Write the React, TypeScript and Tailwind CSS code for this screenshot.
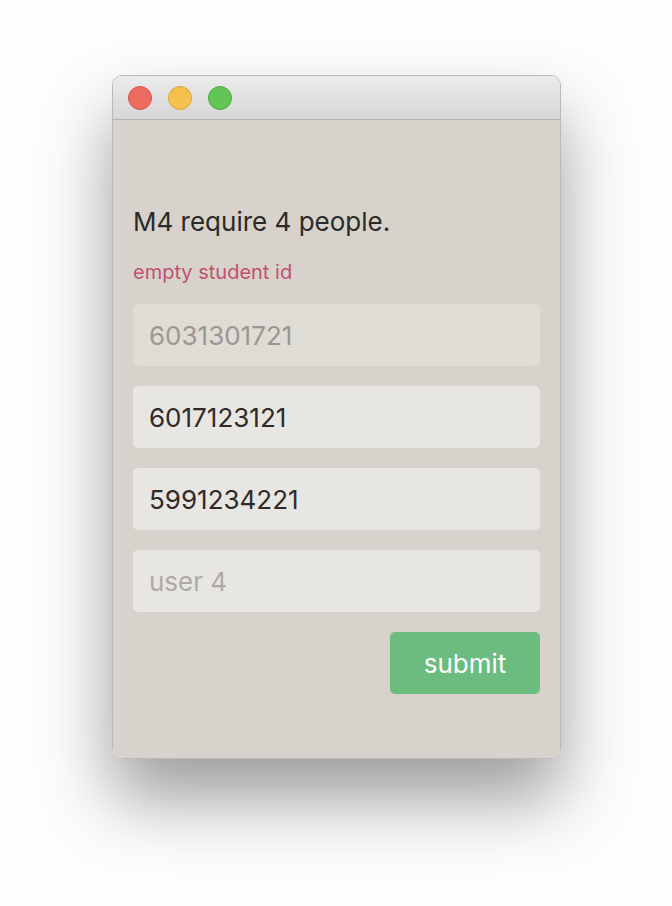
export default function App() {
  const font = { fontFamily: "Inter, 'Noto Sans', sans-serif" };
  return (
    <div className="w-[672px] h-[906px] bg-[#fdfdfd] flex justify-center pt-[75px] pl-[1px]" style={font}>
      <div className="w-[449px] h-[684px] flex flex-col rounded-[10px] border border-[#b9b9b9] overflow-hidden shadow-[0_40px_70px_rgba(0,0,0,0.38)]">
        {/* title bar */}
        <div className="h-[44px] shrink-0 flex items-center gap-[16px] pl-[15px] bg-gradient-to-b from-[#ececec] to-[#d6d6d6] border-b border-[#b3b3b3]">
          <span className="w-[24px] h-[24px] rounded-full bg-[#ed6b5f] border border-[#d5544a]" />
          <span className="w-[24px] h-[24px] rounded-full bg-[#f6c04f] border border-[#daa23a]" />
          <span className="w-[24px] h-[24px] rounded-full bg-[#62c655] border border-[#4daa41]" />
        </div>

        {/* body */}
        <div className="flex-1 bg-[#d7d3cc] px-[20px] pt-[86px]">
          <p className="text-[26px] leading-[32px] text-[#2b2a28]">M4 require 4 people.</p>
          <p className="mt-[22px] text-[20px] leading-[24px] text-[#c1506f]">empty student id</p>

          <div className="mt-[20px] flex flex-col gap-[20px]">
            <div className="h-[62px] rounded-[5px] bg-[#dfdbd5] flex items-center px-[16px] text-[26px] text-[#9b9690]">
              6031301721
            </div>
            <div className="h-[62px] rounded-[5px] bg-[#e8e6e2] flex items-center px-[16px] text-[26px] text-[#2f2a29]">
              6017123121
            </div>
            <div className="h-[62px] rounded-[5px] bg-[#e8e6e2] flex items-center px-[16px] text-[26px] text-[#2f2a29]">
              5991234221
            </div>
            <input
              className="h-[62px] rounded-[5px] bg-[#e8e6e2] px-[16px] text-[26px] text-[#2f2a29] placeholder:text-[#adaaa6] outline-none"
              placeholder="user 4"
            />
            <div className="flex justify-end">
              <button className="w-[150px] h-[62px] rounded-[5px] bg-[#6cbb7f] text-white text-[26px]">
                submit
              </button>
            </div>
          </div>
        </div>
      </div>
    </div>
  );
}
